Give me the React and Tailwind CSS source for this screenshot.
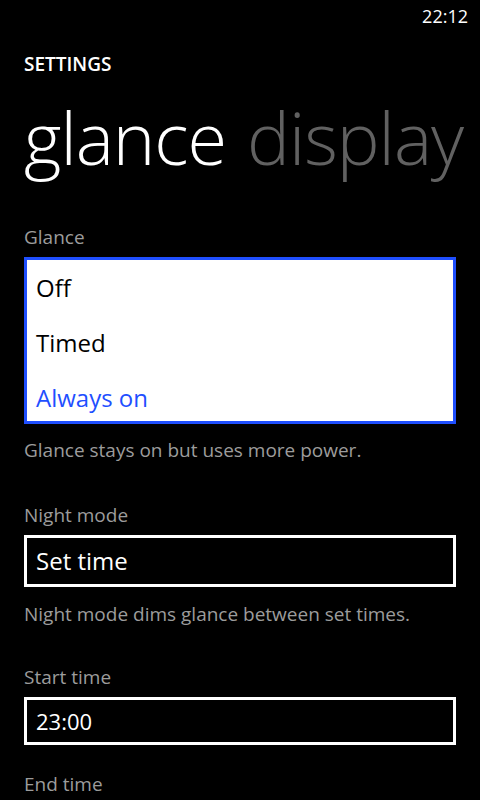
import React from "react";

const font = { fontFamily: '"Open Sans", "Noto Sans", sans-serif' };

const Label = ({ children, className = "" }) => (
  <div className={`text-[19px] leading-[24px] text-[#9c9c9c] ${className}`}>{children}</div>
);

const Picker = ({ value, className = "", size = "text-[24px]", height = "h-[52px]" }) => (
  <div className={`${height} border-[3px] border-white flex items-center px-[9px] text-white ${size} ${className}`}>
    {value}
  </div>
);

export default function App() {
  const options = ["Off", "Timed", "Always on"];
  const selected = "Always on";

  return (
    <div className="w-[480px] h-[800px] bg-black overflow-hidden" style={font}>
      <div className="pt-[4px] pr-[12px] text-right text-[18px] leading-[24px] text-white">22:12</div>

      <div className="px-6">
        <div className="mt-[22px] text-[19px] leading-[28px] font-semibold text-white">SETTINGS</div>

        <div className="mt-[19px] flex gap-[21px] text-[72px] leading-[80px] font-light whitespace-nowrap tracking-[-1px]">
          <span className="text-white">glance</span>
          <span className="text-[#616161]">display</span>
        </div>

        <Label className="mt-[48px]">Glance</Label>
        <div className="mt-[8px] h-[167px] border-[3px] border-[#1f4fff] bg-white overflow-hidden">
          {options.map((o) => (
            <div
              key={o}
              className={`h-[55px] leading-[55px] px-[9px] text-[24px] ${o === selected ? "text-[#1f4fff]" : "text-black"}`}
            >
              {o}
            </div>
          ))}
        </div>
        <Label className="mt-[14px]">Glance stays on but uses more power.</Label>

        <Label className="mt-[41px]">Night mode</Label>
        <Picker className="mt-[8px]" value="Set time" />
        <Label className="mt-[15px]">Night mode dims glance between set times.</Label>

        <Label className="mt-[39px]">Start time</Label>
        <Picker className="mt-[8px]" value="23:00" size="text-[22px]" height="h-[48px]" />

        <Label className="mt-[27px]">End time</Label>
      </div>
    </div>
  );
}
